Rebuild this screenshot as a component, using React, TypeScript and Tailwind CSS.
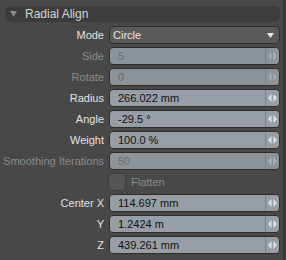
import React from "react";

type Row = {
  label: string;
  value: string;
  disabled?: boolean;
};

const rows: Row[] = [
  { label: "Side", value: "5", disabled: true },
  { label: "Rotate", value: "0", disabled: true },
  { label: "Radius", value: "266.022 mm" },
  { label: "Angle", value: "-29.5 °" },
  { label: "Weight", value: "100.0 %" },
  { label: "Smoothing Iterations", value: "50", disabled: true },
];

const centerRows: Row[] = [
  { label: "Center X", value: "114.697 mm" },
  { label: "Y", value: "1.2424 m" },
  { label: "Z", value: "439.261 mm" },
];

const Label = ({ text, disabled }: { text: string; disabled?: boolean }) => (
  <div
    className={`w-[104px] shrink-0 text-right whitespace-nowrap ${
      disabled ? "text-[#8a8a8a]" : "text-[#e2e2e2]"
    }`}
  >
    {text}
  </div>
);

const Spinner = ({ disabled }: { disabled?: boolean }) => (
  <div className="w-[14px] h-full flex items-center justify-center border-l border-[#7c8288]">
    <svg width="9" height="8" viewBox="0 0 9 8">
      <path d="M3.5 0 L0 4 L3.5 8 Z" fill={disabled ? "#a9afb4" : "#dfe3e6"} />
      <path d="M5.5 0 L9 4 L5.5 8 Z" fill={disabled ? "#a9afb4" : "#dfe3e6"} />
    </svg>
  </div>
);

const NumberField = ({ row }: { row: Row }) => (
  <div className="flex items-center h-[18px]">
    <Label text={row.label} disabled={row.disabled} />
    <div
      className={`ml-[5px] w-[171px] h-full flex items-center rounded-[4px] border border-[#2d2d2d] ${
        row.disabled ? "bg-[#8c9399]" : "bg-[#979ea5]"
      }`}
    >
      <div
        className={`flex-1 pl-[8px] whitespace-nowrap ${
          row.disabled ? "text-[#676d73]" : "text-[#111]"
        }`}
      >
        {row.value}
      </div>
      <Spinner disabled={row.disabled} />
    </div>
  </div>
);

export default function App() {
  return (
    <div
      className="w-[286px] h-[260px] bg-[#484848] border-r-[3px] border-[#3a3a3a] text-[11px] leading-none overflow-hidden"
      style={{ fontFamily: '"Liberation Sans", Arial, sans-serif' }}
    >
      <div className="mt-[6px] ml-[5px] w-[275px] h-[16px] rounded-[5px] bg-[#3c3c3c] flex items-center">
        <svg width="7" height="6" viewBox="0 0 7 6" className="ml-[5px]">
          <path d="M0 0 L7 0 L3.5 6 Z" fill="#8a8a8a" />
        </svg>
        <span className="ml-[8px] text-[12px] text-[#d4d4d4]">Radial Align</span>
      </div>

      <div className="mt-[4px] flex flex-col gap-[3px]">
        <div className="flex items-center h-[18px]">
          <Label text="Mode" />
          <div className="ml-[5px] w-[171px] h-full flex items-center rounded-[4px] border border-[#2d2d2d] bg-[#5a5a5a]">
            <div className="flex-1 pl-[3px] text-[#e6e6e6]">Circle</div>
            <svg width="7" height="5" viewBox="0 0 7 5" className="mr-[5px]">
              <path d="M0 0 L7 0 L3.5 5 Z" fill="#e8e8e8" />
            </svg>
          </div>
        </div>

        {rows.map((r) => (
          <NumberField key={r.label} row={r} />
        ))}

        <div className="flex items-center h-[18px]">
          <div className="w-[104px] shrink-0" />
          <div className="ml-[4px] w-[18px] h-[18px] rounded-[4px] bg-[#555555] border border-[#3d3d3d]" />
          <span className="ml-[5px] text-[#8a8a8a]">Flatten</span>
        </div>

        {centerRows.map((r) => (
          <NumberField key={r.label} row={r} />
        ))}
      </div>
    </div>
  );
}
